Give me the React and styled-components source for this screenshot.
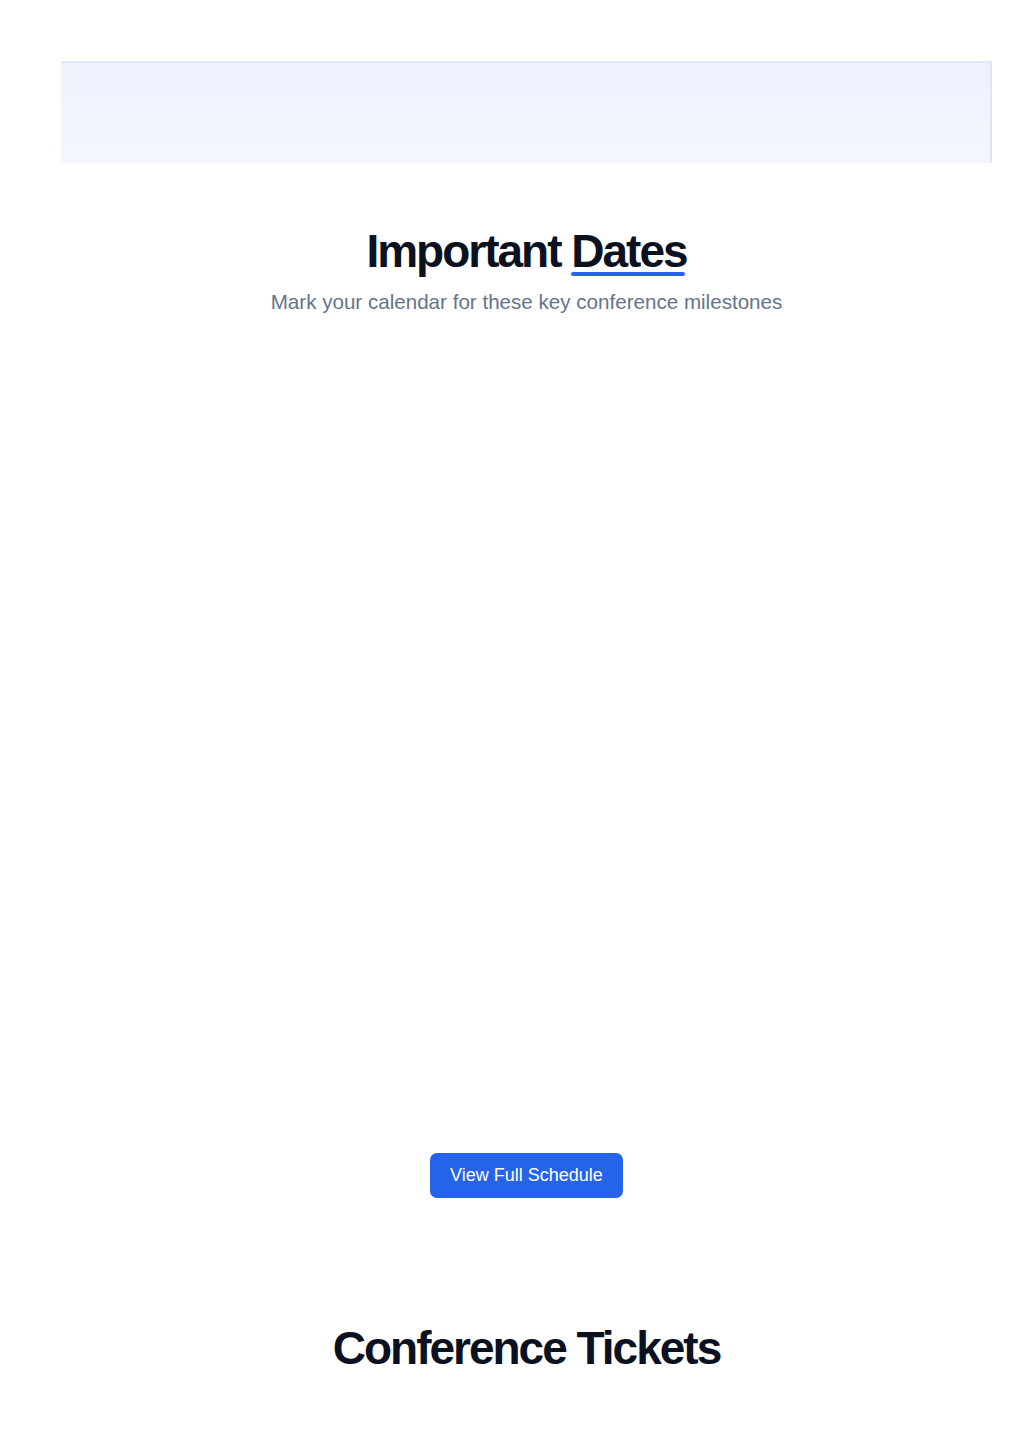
import styled, { createGlobalStyle } from "styled-components";

const GlobalStyle = createGlobalStyle`
  body {
    margin: 0;
    background: #ffffff;
    font-family: "Liberation Sans", Arial, sans-serif;
  }
`;

const Page = styled.div`
  padding: 61px 32px 0 61px;
  width: 931px;
`;

const Banner = styled.div`
  height: 100px;
  border-top: 2px solid #e0e8fb;
  border-right: 2px solid #dce5f8;
  background: linear-gradient(180deg, #edf2fd 0%, #f3f6fe 100%);
`;

const Section = styled.section`
  display: flex;
  flex-direction: column;
  align-items: center;
  padding-top: ${(p) => p.top}px;
`;

const Heading = styled.h2`
  margin: 0;
  font-size: 46px;
  line-height: 56px;
  font-weight: 700;
  letter-spacing: -2px;
  color: #0b1120;
  text-align: center;
`;

const Accent = styled.span`
  position: relative;
  display: inline-block;

  &::after {
    content: "";
    position: absolute;
    left: 0;
    right: 2px;
    bottom: 3px;
    height: 4px;
    border-radius: 2px;
    background: #2563eb;
  }
`;

const Subtitle = styled.p`
  margin: 9px 0 0;
  font-size: 20.6px;
  line-height: 28px;
  color: #64748b;
  text-align: center;
`;

const Timeline = styled.div`
  height: 837px;
  width: 100%;
`;

const Button = styled.button`
  height: 45px;
  padding: 0 20px;
  border: none;
  border-radius: 7px;
  background: #2563eb;
  color: #ffffff;
  font-family: "Liberation Sans", Arial, sans-serif;
  font-size: 18px;
  cursor: pointer;
`;

function App() {
  return (
    <>
      <GlobalStyle />
      <Page>
        <Banner />
        <Section top={60}>
          <Heading>
            Important <Accent>Dates</Accent>
          </Heading>
          <Subtitle>Mark your calendar for these key conference milestones</Subtitle>
          <Timeline />
          <Button>View Full Schedule</Button>
        </Section>
        <Section top={122}>
          <Heading>Conference Tickets</Heading>
        </Section>
      </Page>
    </>
  );
}

export default App;
